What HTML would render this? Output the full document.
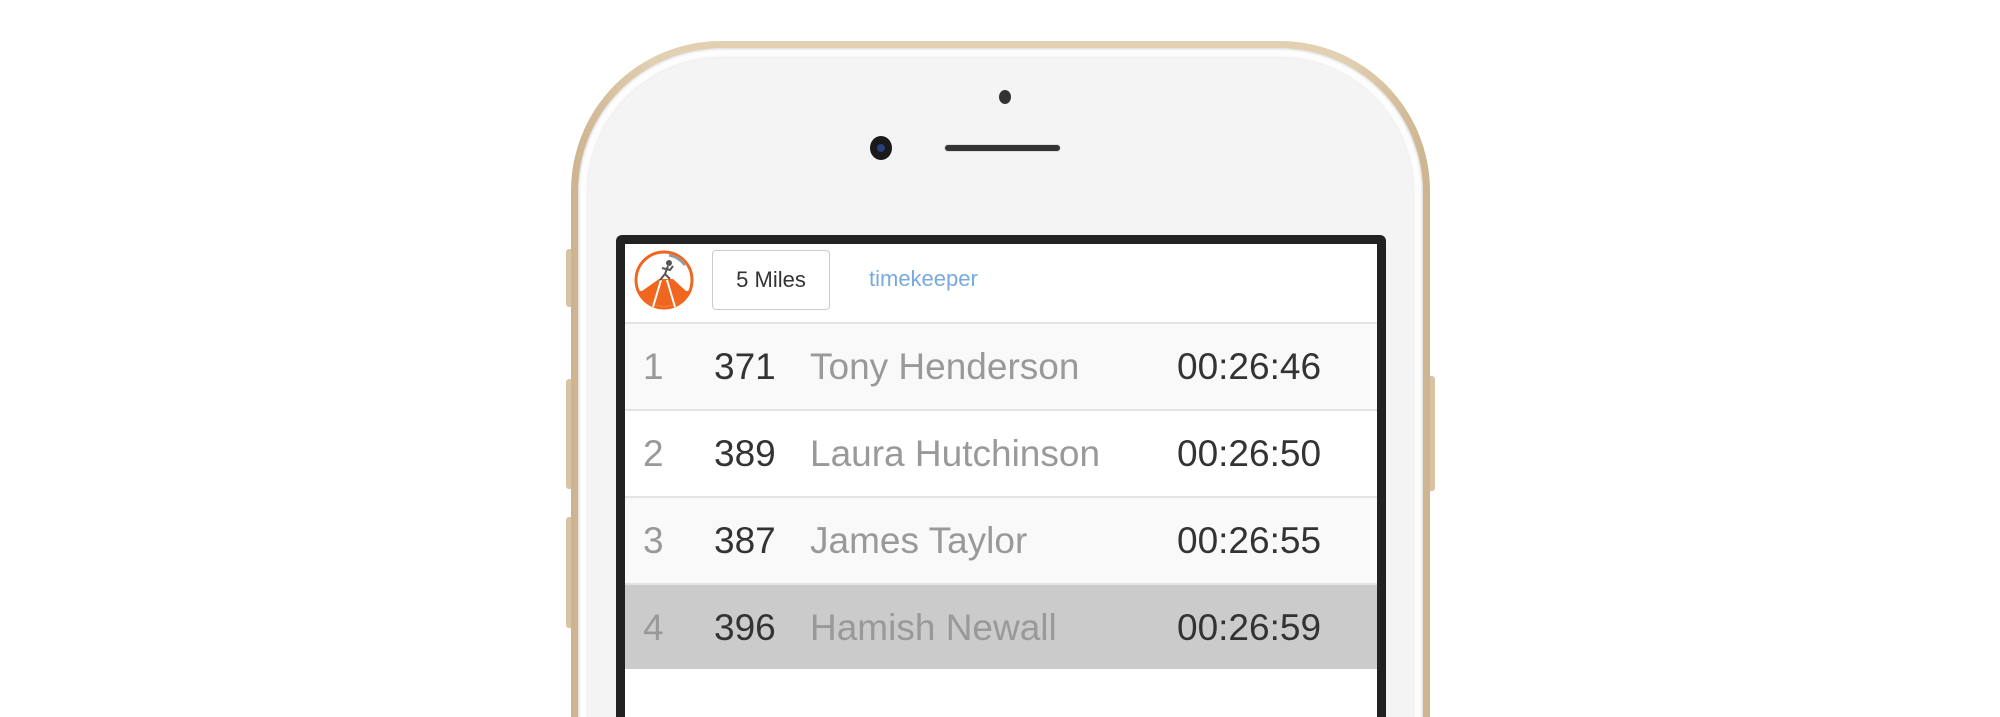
<!DOCTYPE html>
<html><head><style>
html,body{margin:0;padding:0;background:#fff;width:2000px;height:717px;overflow:hidden;position:relative;font-family:"Liberation Sans",sans-serif}
#w{position:absolute;left:0;top:0;width:2000px;height:717px;overflow:hidden}
.abs{position:absolute}
.btn{position:absolute;background:#d8c3a2;border-radius:3px}
.r{height:85px;border-top:2px solid #e3e3e3;position:relative}
.r span{position:absolute;top:22px}
</style></head><body><div id="w">
<div class="btn" style="left:566px;top:249px;width:8px;height:58px"></div>
<div class="btn" style="left:566px;top:379px;width:8px;height:110px"></div>
<div class="btn" style="left:566px;top:517px;width:8px;height:111px"></div>
<div class="btn" style="left:1427px;top:376px;width:8px;height:115px"></div>
<div class="abs" style="left:571px;top:41px;width:859px;height:900px;border-radius:150px;background:linear-gradient(90deg,#cdb48f,#e3d0b3 10%,#e3d0b3 90%,#cdb48f)"></div>
<div class="abs" style="left:578px;top:48px;width:845px;height:890px;border-radius:144px;background:#fdfdfd;box-shadow:inset 0 0 3px #bbb"></div>
<div class="abs" style="left:588px;top:58px;width:825px;height:880px;border-radius:134px;background:#f4f4f4;box-shadow:0 0 3px #ddd"></div>
<div class="abs" style="left:999px;top:90px;width:12px;height:14px;border-radius:50%;background:#333"></div>
<div class="abs" style="left:870px;top:136px;width:22px;height:24px;border-radius:50%;background:#1a1a1a"><div style="margin:8px auto 0;width:8px;height:8px;border-radius:50%;background:#25407a"></div></div>
<div class="abs" style="left:945px;top:145px;width:115px;height:6px;border-radius:3px;background:#333;box-shadow:0 0 0 1px #ddd"></div>
<div class="abs" style="left:616px;top:235px;width:770px;height:500px;background:#222;border-radius:6px 6px 0 0"></div>
<div class="abs" style="left:625px;top:244px;width:752px;height:480px;background:#fff">
  <svg class="abs" style="left:8px;top:5px" width="62" height="62" viewBox="0 0 62 62">
    <circle cx="31" cy="31" r="28" fill="#fff" stroke="#f0661f" stroke-width="3"/>
    <path d="M6 42 L56 42 A28 28 0 0 1 6 42Z" fill="#f0661f"/>
    <path d="M9 42 L53 42 L40 30 L26 30 Z" fill="#f0661f"/>
    <path d="M28 31 L20 58 M34 31 L42 58" stroke="#fff" stroke-width="2"/>
    <path d="M36 6 A26 26 0 0 1 52 16" stroke="#999" stroke-width="3" fill="none"/>
    <circle cx="36" cy="14" r="3" fill="#555"/>
    <path d="M35 17 L32 25 L27 31 M32 25 L37 30 M29 19 L37 21 L40 17" stroke="#555" stroke-width="2" fill="none"/>
  </svg>
  <div class="abs" style="left:87px;top:6px;width:118px;height:60px;border:1px solid #ccc;border-radius:4px;box-sizing:border-box;font-size:22px;color:#333;text-align:center;line-height:58px">5 Miles</div>
  <div class="abs" style="left:244px;top:22px;font-size:22px;color:#7aaadd">timekeeper</div>
</div>
<div class="abs" style="left:625px;top:322px;width:752px;font-size:37px">
  <div class="r" style="background:#f9f9f9">
    <span style="left:18px;color:#999">1</span><span style="left:89px;color:#333">371</span><span style="left:185px;color:#999">Tony Henderson</span><span style="left:552px;color:#333">00:26:46</span></div>
  <div class="r" style="background:#fff">
    <span style="left:18px;color:#999">2</span><span style="left:89px;color:#333">389</span><span style="left:185px;color:#999">Laura Hutchinson</span><span style="left:552px;color:#333">00:26:50</span></div>
  <div class="r" style="background:#f9f9f9">
    <span style="left:18px;color:#999">3</span><span style="left:89px;color:#333">387</span><span style="left:185px;color:#999">James Taylor</span><span style="left:552px;color:#333">00:26:55</span></div>
  <div class="r" style="background:#cbcbcb;height:84px">
    <span style="left:18px;color:#999">4</span><span style="left:89px;color:#333">396</span><span style="left:185px;color:#999">Hamish Newall</span><span style="left:552px;color:#333">00:26:59</span></div>
</div>
</div></body></html>
